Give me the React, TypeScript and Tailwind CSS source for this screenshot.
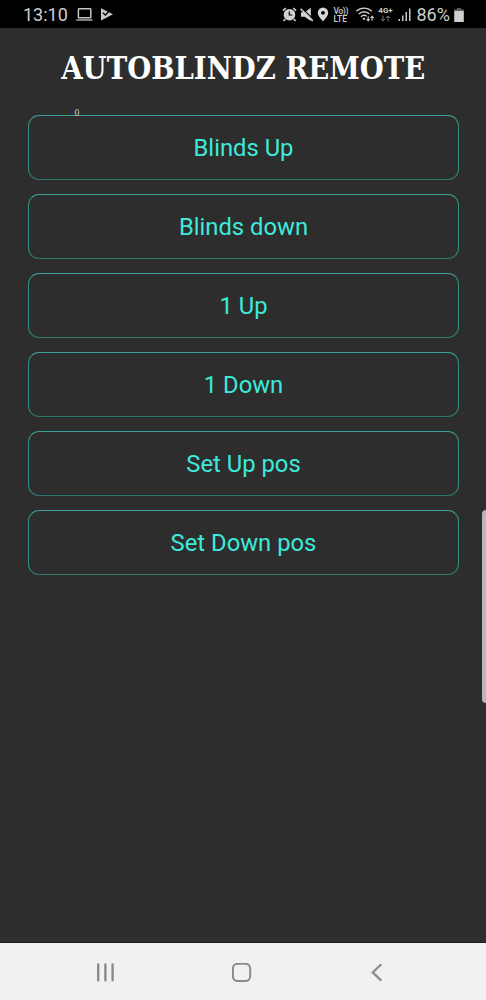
import React from "react";

const actions = ["Blinds Up", "Blinds down", "1 Up", "1 Down", "Set Up pos", "Set Down pos"];

function LaptopIcon() {
  return (
    <svg className="ml-[8px] h-[13px] w-[17px] shrink-0" viewBox="0 0 17 13" fill="none" stroke="#c4c4c4">
      <rect x="2.4" y="0.8" width="12.4" height="9" rx="0.6" strokeWidth="1.5" />
      <path d="M0.3 12h16.2" strokeWidth="1.3" />
    </svg>
  );
}

function PlayCheckIcon() {
  return (
    <svg className="ml-[7px] h-[13px] w-[14px] shrink-0" viewBox="0 0 14 13">
      <path d="M1 0.3L13 6.3L1 12.6Z" fill="#c9c9c9" />
      <path d="M2.8 4.8L5.4 7L10 2" fill="none" stroke="#000" strokeWidth="1.3" />
    </svg>
  );
}

function AlarmIcon() {
  return (
    <svg className="h-[15px] w-[15px] shrink-0" viewBox="0 0 15 15">
      <path d="M1 3.6L3.8 1M14 3.6L11.2 1M3.2 12.1L1.5 14M11.8 12.1L13.5 14" stroke="#d2d2d2" strokeWidth="1.6" />
      <circle cx="7.5" cy="7.7" r="5.8" fill="#d2d2d2" />
      <path d="M7.3 4.5V8H10.4" fill="none" stroke="#000" strokeWidth="1.2" />
    </svg>
  );
}

function MutedIcon() {
  return (
    <svg className="ml-[3px] h-[15px] w-[14px] shrink-0" viewBox="0 0 14 15">
      <path d="M1 5.3H4.6L10.8 0.8V14L4.6 9.7H1Z" fill="#d2d2d2" />
      <path d="M1.5 0.8L14 13.1" stroke="#000" strokeWidth="1.2" />
      <path d="M0.6 1.8L12.8 13.9" stroke="#d2d2d2" strokeWidth="1.5" />
    </svg>
  );
}

function LocationIcon() {
  return (
    <svg className="ml-[3px] h-[15px] w-[12px] shrink-0" viewBox="0 0 12 15">
      <path
        fillRule="evenodd"
        d="M6 0.6A5.2 5.2 0 0 0 0.8 5.8C0.8 9.2 4.2 12 6 14.4C7.8 12 11.2 9.2 11.2 5.8A5.2 5.2 0 0 0 6 0.6ZM6 3.9A1.9 1.9 0 1 1 6 7.7A1.9 1.9 0 0 1 6 3.9Z"
        fill="#d8d8d8"
      />
    </svg>
  );
}

function WifiIcon() {
  return (
    <svg className="ml-[7px] h-[15px] w-[19px] shrink-0" viewBox="0 0 19 15" fill="none" stroke="#cfcfcf">
      <path d="M0.4 4.3C4.8 0.1 11.4 0.1 15.8 4.3M2.7 7.1C6 4.1 10.2 4.1 13.5 7.1M4.9 9.7C6.9 8 9 8 10.6 9.3" strokeWidth="1.4" />
      <path d="M6.3 11.6L8.1 10.6L9.4 11.6L8.1 13.3Z" fill="#cfcfcf" stroke="none" />
      <path d="M12.2 9.2V13.7M10.6 12L12.2 13.8L13.7 12M16.1 13.7V9.2M14.6 11L16.1 9.2L17.7 11" strokeWidth="1.1" />
    </svg>
  );
}

function SignalIcon() {
  return (
    <svg className="ml-[4px] h-[14px] w-[14px] shrink-0" viewBox="0 0 14 14" fill="#c9c9c9">
      <rect x="0.5" y="11" width="1.5" height="2" />
      <rect x="4" y="7.5" width="1.5" height="5.5" />
      <rect x="7.5" y="4" width="1.5" height="9" />
      <rect x="11" y="0.5" width="1.5" height="12.5" />
    </svg>
  );
}

function StatusBar() {
  return (
    <header className="flex h-[28px] items-center bg-black pt-[1px] pr-[22.5px] pl-[23px] text-[#cecece]">
      <span className="w-[45px] text-[18px] leading-none whitespace-nowrap">13:10</span>
      <LaptopIcon />
      <PlayCheckIcon />
      <div className="ml-auto flex items-center">
        <AlarmIcon />
        <MutedIcon />
        <LocationIcon />
        <span className="ml-[5px] flex w-[15px] flex-col text-[8.5px] leading-[8px] font-medium whitespace-nowrap">
          <span className="tracking-[-0.4px]">Vo))</span>
          <span>LTE</span>
        </span>
        <WifiIcon />
        <span className="ml-[3px] flex w-[16px] flex-col items-center text-[8px] leading-[8px] font-bold">
          <span>4G+</span>
          <svg className="h-[7px] w-[11px]" viewBox="0 0 11 7" fill="none" stroke="#777">
            <path d="M3 0.5V6M1 4L3 6L5 4M8 6.5V1M6 3L8 1L10 3" />
          </svg>
        </span>
        <SignalIcon />
        <span className="ml-[5px] w-[33px] text-[18px] leading-none whitespace-nowrap">86%</span>
        <svg className="ml-[4px] h-[14px] w-[10px] shrink-0" viewBox="0 0 10 14">
          <path d="M3 0H7V1.3H9.8V3H0.2V1.3H3Z" fill="#5c5c5c" />
          <rect x="0.2" y="3" width="9.6" height="11" fill="#cfcfcf" />
        </svg>
      </div>
    </header>
  );
}

function NavigationBar() {
  return (
    <nav className="flex h-[57px] items-center justify-between bg-[#f1f1f1] pt-[3px] pr-[100px] pl-[95px] shadow-[0_-1px_0_#1d1d1d]">
      <button aria-label="Recent apps">
        <svg className="block h-[20px] w-[20px]" viewBox="0 0 20 20" stroke="#8a8a8a" strokeWidth="2.4" strokeLinecap="round">
          <path d="M3.2 1.5V17.2M10.4 1.5V17.2M17.6 1.5V17.2" />
        </svg>
      </button>
      <button aria-label="Home">
        <svg className="block h-[20px] w-[20px]" viewBox="0 0 20 20" fill="none" stroke="#8a8a8a" strokeWidth="2">
          <rect x="0.9" y="0.8" width="17.3" height="17.3" rx="4.8" />
        </svg>
      </button>
      <button aria-label="Back">
        <svg className="block h-[20px] w-[18px]" viewBox="0 0 18 20" fill="none" stroke="#8a8a8a" strokeWidth="2.2">
          <path d="M13.3 1.2L4.7 9.4L13.3 17.6" />
        </svg>
      </button>
    </nav>
  );
}

export default function App() {
  return (
    <div className="relative flex h-[1000px] w-[486px] flex-col overflow-hidden bg-[#2d2d2d] font-['Roboto',sans-serif]">
      <StatusBar />
      <main className="flex-1 pr-[27px] pl-[28px]">
        <h1 className="flex h-[87px] justify-center pt-[20px] font-['DejaVu_Serif_Condensed','DejaVu_Serif',serif] text-[31.5px] leading-[40px] font-bold whitespace-nowrap text-white [font-stretch:condensed]">
          <span className="inline-block scale-x-[0.972]">AUTOBLINDZ REMOTE</span>
        </h1>
        <div className="flex flex-col gap-[14px]">
          {actions.map((label) => (
            <button
              key={label}
              className="h-[65px] rounded-[11px] border border-x-[#2f8f82] border-t-[#3fa195] border-b-[#2c786e] pt-[2px] text-[23.8px] leading-none text-[#3ceadb]"
            >
              {label}
            </button>
          ))}
        </div>
      </main>
      <span className="absolute top-[109px] left-[74.5px] font-['Liberation_Serif',serif] text-[9.5px] leading-[9px] text-[#d0d0d0]">0</span>
      <div className="absolute top-[510px] right-0 h-[193px] w-[4.5px] rounded-l-[4px] bg-[#b8b8b8]" />
      <NavigationBar />
    </div>
  );
}
